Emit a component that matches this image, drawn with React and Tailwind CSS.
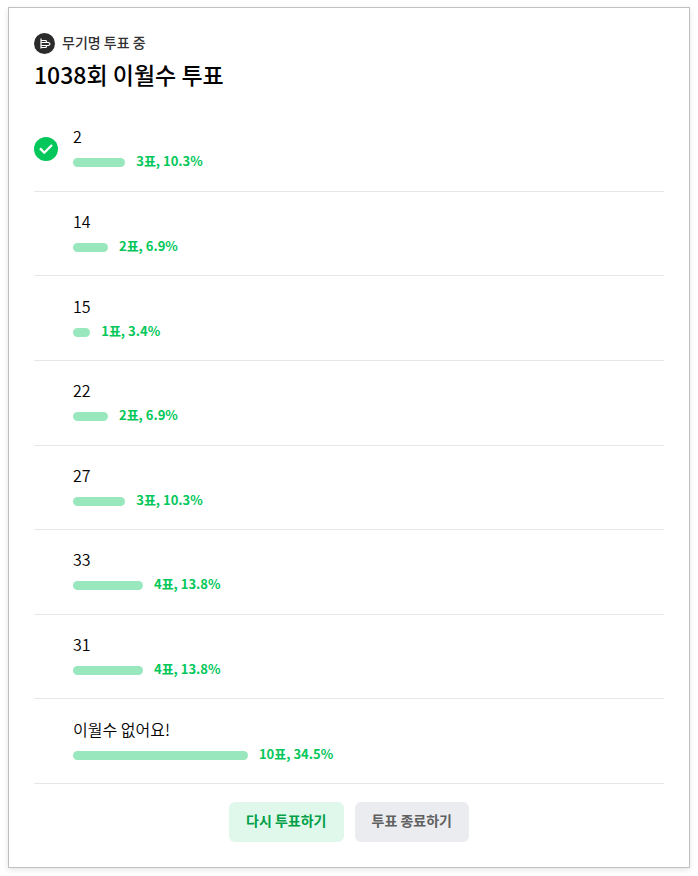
import React from "react";

const options = [
  { name: "2", votes: 3, percent: 10.3, picked: true },
  { name: "14", votes: 2, percent: 6.9 },
  { name: "15", votes: 1, percent: 3.4 },
  { name: "22", votes: 2, percent: 6.9 },
  { name: "27", votes: 3, percent: 10.3 },
  { name: "33", votes: 4, percent: 13.8 },
  { name: "31", votes: 4, percent: 13.8 },
  { name: "이월수 없어요!", votes: 10, percent: 34.5 },
];

function PollIcon() {
  return (
    <svg className="size-[21px] shrink-0" viewBox="0 0 21 21" fill="none" aria-hidden="true">
      <circle cx="10.5" cy="10.5" r="10.5" fill="#2b2b2b" />
      <path
        d="M7 5.5V15.5M7 7.5H12L12.8 9.5M7 9.5H14.8L16 11L14.8 12.5H7M12.8 12.5L12 14.5H7"
        stroke="#fff"
        strokeWidth="1.2"
      />
    </svg>
  );
}

function CheckIcon() {
  return (
    <svg className="size-6" viewBox="0 0 24 24" fill="none" role="img" aria-label="내 투표">
      <circle cx="12" cy="12" r="12" fill="#03c75a" />
      <path d="M6 11.4L10.3 15.7L18 8" stroke="#fff" strokeWidth="2.3" />
    </svg>
  );
}

function Option({ name, votes, percent, picked }) {
  return (
    <li className="flex items-center gap-[15px] border-b border-[#e6e6e8] py-4">
      <div className="size-6 shrink-0">{picked && <CheckIcon />}</div>
      <div className="min-w-0 flex-1">
        <p className="text-[16px] leading-6 font-[350] text-black">{name}</p>
        <div className="flex items-end gap-[11px] pr-[84px]">
          <div
            className="mb-[6px] h-[9px] shrink-0 rounded-full bg-[#99e8bd]"
            style={{ width: `${percent}%` }}
          />
          <span className="pt-px text-[13px] leading-6 font-bold whitespace-nowrap text-[#03c75a]">
            {votes}표, {percent}%
          </span>
        </div>
      </div>
    </li>
  );
}

export default function App() {
  return (
    <main className="bg-white px-2 py-[7px] font-['Noto_Sans_CJK_KR',sans-serif]">
      <section className="border border-[#c0c0c0] bg-white p-[25px] shadow-[0_2px_6px_rgba(0,0,0,0.1)]">
        <header>
          <div className="flex items-start gap-[7px]">
            <PollIcon />
            <p className="text-[14px] leading-[18px] font-medium text-[#333]">무기명 투표 중</p>
          </div>
          <h1 className="mt-1 text-[23px] leading-8 font-medium text-black">1038회 이월수 투표</h1>
        </header>
        <ul className="mt-[17px] grid min-h-[677px] auto-rows-fr">
          {options.map((option) => (
            <Option key={option.name} {...option} />
          ))}
        </ul>
        <div className="mt-[18px] flex justify-center gap-[11px]">
          <button
            type="button"
            className="h-10 rounded-md bg-[#e0f8eb] px-[17px] pb-1 text-[14px] font-bold text-[#009f47]"
          >
            다시 투표하기
          </button>
          <button
            type="button"
            className="h-10 rounded-md bg-[#ebecef] px-[17px] pb-1 text-[14px] font-bold text-[#606060]"
          >
            투표 종료하기
          </button>
        </div>
      </section>
    </main>
  );
}
